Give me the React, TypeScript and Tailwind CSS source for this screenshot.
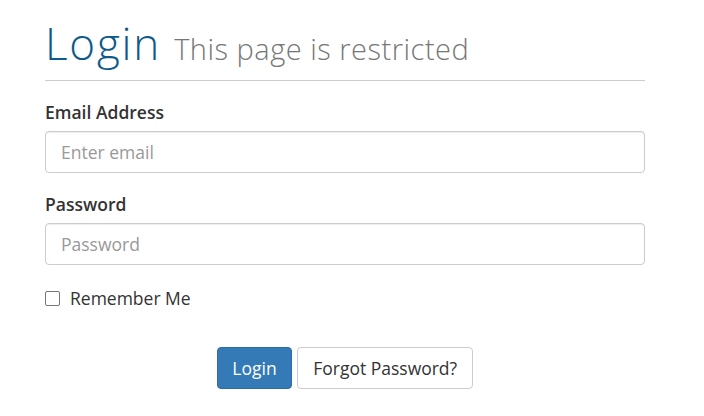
export default function App() {
  return (
    <div className="w-[704px] h-[416px] bg-white" style={{ fontFamily: '"Open Sans", sans-serif' }}>
      <div className="w-[600px] ml-[45px] pt-[20px]">
        <div className="flex items-baseline gap-[13px] h-[52px] pb-[8px]" style={{ fontFamily: '"Open Sans", sans-serif' }}>
          <span className="text-[44px] leading-[46px] font-light tracking-[1.8px] text-[#0e5a8a]">Login</span>
          <span className="text-[29px] leading-[29px] font-light tracking-[0.5px] text-[#777777]">This page is restricted</span>
        </div>
        <div className="h-px bg-[#cccccc] mt-[8px]" />
        <div className="mt-[20px]">
          <label className="block text-[17.5px] leading-[22px] font-semibold text-[#333333]">Email Address</label>
          <div className="mt-[8px] h-[42px] rounded-[4px] border border-[#cccccc] shadow-[inset_0_1px_1px_rgba(0,0,0,0.075)] flex items-center px-[15px] text-[17.5px] text-[#999999]">
            Enter email
          </div>
        </div>
        <div className="mt-[20px]">
          <label className="block text-[17.5px] leading-[22px] font-semibold text-[#333333]">Password</label>
          <div className="mt-[8px] h-[42px] rounded-[4px] border border-[#cccccc] shadow-[inset_0_1px_1px_rgba(0,0,0,0.075)] flex items-center px-[15px] text-[17.5px] text-[#999999]">
            Password
          </div>
        </div>
        <div className="mt-[22px] flex items-center gap-[10px]">
          <span className="w-[15px] h-[15px] rounded-[2px] border-[1.5px] border-[#767676] box-border" />
          <span className="text-[17.5px] leading-[22px] text-[#333333]">Remember Me</span>
        </div>
        <div className="mt-[38px] flex justify-center gap-[5px]">
          <div className="h-[42px] px-[14.5px] rounded-[4px] bg-[#337ab7] border border-[#2e6da4] text-white text-[17.5px] flex items-center">Login</div>
          <div className="h-[42px] px-[15px] rounded-[4px] bg-white border border-[#cccccc] text-[#333333] text-[17.5px] flex items-center">Forgot Password?</div>
        </div>
      </div>
    </div>
  );
}
